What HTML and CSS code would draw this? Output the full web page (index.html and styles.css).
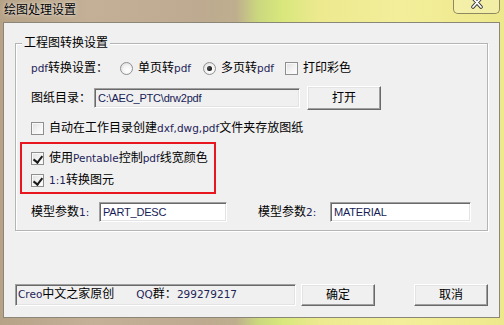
FILE: index.html
```html
<!DOCTYPE html>
<html>
  <head>
    <meta charset="utf-8">
    <title>绘图处理设置</title>
    <link rel="stylesheet" href="styles.css">
  </head>
  <body>
    <div class="window">
      <!-- 标题栏 -->
      <div class="titlebar">
        <span class="title">绘图处理设置</span>
        <span class="close">
          <svg width="14" height="10" viewBox="0 0 14 10">
            <path d="M3 -2 L11 7 M11 -2 L3 7" stroke="#3a3a3a" stroke-width="3.6" stroke-linecap="round" fill="none"/>
            <path d="M3 -2 L11 7 M11 -2 L3 7" stroke="#fff" stroke-width="1.8" stroke-linecap="round" fill="none"/>
          </svg>
        </span>
      </div>

      <div class="client">
        <!-- 工程图转换设置 -->
        <div class="group">
          <span class="group-title">工程图转换设置</span>

          <div class="row row-mode">
            <span class="label mode-label"><span class="en">pdf</span>转换设置：</span>
            <label class="opt opt-single"><span class="radio"></span><span class="txt">单页转<span class="en">pdf</span></span></label>
            <label class="opt opt-multi"><span class="radio checked"></span><span class="txt">多页转<span class="en">pdf</span></span></label>
            <label class="opt"><span class="check"></span><span class="txt">打印彩色</span></label>
          </div>

          <div class="row row-dir">
            <span class="label dir-label">图纸目录：</span>
            <input class="field readonly dir" value="C:\AEC_PTC\drw2pdf" readonly>
            <button class="btn open">打开</button>
          </div>

          <label class="row opt row-auto"><span class="check"></span><span class="txt">自动在工作目录创建<span class="en">dxf,dwg,pdf</span>文件夹存放图纸</span></label>

          <div class="redbox">
            <label class="line opt"><span class="check checked"></span><span class="txt">使用<span class="en">Pentable</span>控制<span class="en">pdf</span>线宽颜色</span></label>
            <label class="line opt"><span class="check checked"></span><span class="txt"><span class="en">1:1</span>转换图元</span></label>
          </div>

          <div class="row row-params">
            <span class="label p-label">模型参数<span class="en">1:</span></span>
            <input class="field p1" value="PART_DESC">
            <span class="label p-label p-label2">模型参数<span class="en">2:</span></span>
            <input class="field p2" value="MATERIAL">
          </div>
        </div>

        <!-- 底部 -->
        <div class="footer">
          <div class="status"><span class="en">Creo</span>中文之家原创<span class="qq"><span class="en">QQ</span>群：<span class="en">299279217</span></span></div>
          <button class="btn ok">确定</button>
          <button class="btn cancel">取消</button>
        </div>
      </div>
    </div>
  </body>
</html>
```

FILE: styles.css
```css
* {
  box-sizing: border-box;
}
html,
body {
  margin: 0;
  height: 100%;
}
body {
  font-family: "Liberation Sans", "Noto Sans CJK SC", sans-serif;
  font-size: 12px;
  color: #000;
  overflow: hidden;
}
.window {
  width: 504px;
  height: 325px;
  padding: 0 4px 7px 3px;
  display: flex;
  flex-direction: column;
  background:
    linear-gradient(90deg, #b6a287 0, #c3b096 90px, #bdaa90 200px, #bfae8e 236px, #cbd87e 258px, #d8e77c 282px, #ece98f 318px, #f3ee9a 400px, #eee88c 504px);
}
.titlebar {
  height: 22px;
  display: flex;
  align-items: flex-start;
}
.title {
  margin: 3px 0 0 1px;
  line-height: 14px;
  text-shadow: 0 0 5px rgba(255, 255, 255, 0.7), 0 0 2px rgba(255, 255, 255, 0.5);
}
.close {
  margin-left: auto;
  width: 47px;
  height: 14px;
  border: 1px solid #8e8760;
  border-top: none;
  border-radius: 0 0 5px 5px;
  background: rgba(255, 255, 240, 0.25);
  display: flex;
  justify-content: center;
  align-items: flex-start;
}
.client {
  flex: 1;
  background: #f0f0f0;
  border: 1px solid #8a8678;
  padding: 0 11px;
}
.en {
  font-family: "DejaVu Sans", "Liberation Sans", sans-serif;
  font-size: 10.5px;
  color: #1e2458;
}
.txt {
  white-space: nowrap;
}

/* 分组框 */
.group {
  margin-top: 20px;
  height: 188px;
  padding: 0 4px;
  border: 1px solid #b4b4b4;
  box-shadow: 1px 1px 0 #fff, inset 1px 1px 0 #fff;
}
.group-title {
  display: block;
  width: max-content;
  margin: -9px 0 0 2px;
  padding: 0 2px;
  line-height: 16px;
  background: #f0f0f0;
}
.row {
  margin-left: 11px;
  display: flex;
  align-items: center;
  line-height: 16px;
}
.row-mode {
  margin-top: 7px;
  height: 20px;
}
.row-dir {
  margin-top: 8px;
  height: 24px;
}
.row-auto {
  margin-top: 10px;
  height: 16px;
}
.row-params {
  margin-top: 8px;
  height: 20px;
}
.label {
  flex: none;
  white-space: nowrap;
}
.mode-label {
  width: 89px;
}
.opt-single {
  width: 83px;
}
.opt-multi {
  width: 82px;
}
.dir-label {
  width: 63px;
}
.p-label {
  width: 68px;
}
.p-label2 {
  width: 72px;
  margin-left: 31px;
}
.opt {
  display: flex;
  align-items: center;
  gap: 5px;
  line-height: 16px;
  cursor: pointer;
}

/* 红框 */
.redbox {
  margin: 6px 0 0 0;
  width: 196px;
  border: 2px solid #e8161f;
  padding: 6px 0 4px 9px;
}
.line {
  height: 16px;
}
.line + .line {
  margin-top: 6px;
}

/* 单选 / 复选 */
.radio,
.check {
  position: relative;
  flex: none;
  width: 13px;
  height: 13px;
  border: 1px solid #8e8f8f;
}
.radio {
  border-radius: 50%;
  background: radial-gradient(circle at 60% 65%, #fff 0, #f4f4f4 45%, #d6d6d6 100%);
}
.radio.checked::after {
  content: "";
  position: absolute;
  left: 3px;
  top: 3px;
  width: 5px;
  height: 5px;
  border-radius: 50%;
  background: radial-gradient(circle at 40% 40%, #555 0, #111 70%);
}
.check {
  background: linear-gradient(135deg, #dedede 0, #f2f2f2 50%, #fff 100%);
  box-shadow: inset 0 0 0 1px #f8f8f8;
}
.check.checked::after {
  content: "";
  position: absolute;
  left: 3px;
  top: 1px;
  width: 4px;
  height: 7px;
  border: solid #1a1a1a;
  border-width: 0 2px 2px 0;
  transform: rotate(38deg);
}

/* 文本框 */
.field {
  flex: none;
  height: 20px;
  margin: 0;
  padding: 0 0 1px 3px;
  font-family: "Liberation Sans", "Noto Sans CJK SC", sans-serif;
  font-size: 11px;
  line-height: 14px;
  letter-spacing: -0.2px;
  color: #161c56;
  background: #fff;
  border: 1px solid;
  border-color: #a0a0a0 #fff #fff #a0a0a0;
  box-shadow: inset 1px 1px 0 #696969, inset -1px -1px 0 #e3e3e3;
  outline: none;
}
.field.readonly {
  background: #f0f0f0;
}
.dir {
  width: 206px;
}
.p1 {
  width: 128px;
}
.p2 {
  width: 141px;
}

/* 按钮 */
.btn {
  flex: none;
  width: 74px;
  height: 22px;
  margin: 0;
  padding: 0;
  font-family: "Liberation Sans", "Noto Sans CJK SC", sans-serif;
  font-size: 12px;
  line-height: 16px;
  color: #000;
  background: #f0f0f0;
  border: 1px solid;
  border-color: #fff #696969 #696969 #fff;
  box-shadow: inset -1px -1px 0 #a0a0a0, inset 1px 1px 0 #e3e3e3;
  cursor: pointer;
}
.btn.open {
  height: 24px;
  margin-left: 7px;
}

/* 底部 */
.footer {
  margin-top: 53px;
  display: flex;
  height: 22px;
}
.status {
  flex: none;
  width: 281px;
  height: 22px;
  padding: 1px 0 0 2px;
  line-height: 16px;
  white-space: nowrap;
  background: #f0f0f0;
  border: 1px solid;
  border-color: #a0a0a0 #fff #fff #a0a0a0;
  box-shadow: inset 1px 1px 0 #696969, inset -1px -1px 0 #e3e3e3;
}
.qq {
  margin-left: 22px;
}
.btn.ok {
  margin-left: 5px;
}
.btn.cancel {
  margin-left: 39px;
}
```
